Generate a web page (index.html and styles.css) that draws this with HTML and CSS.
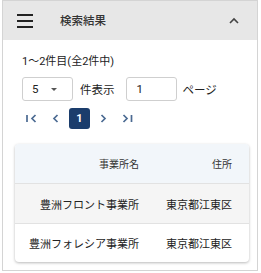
FILE: index.html
```html
<!DOCTYPE html>
<html lang="ja">
<head>
  <meta charset="UTF-8">
  <title>検索結果</title>
  <link rel="stylesheet" href="styles.css">
</head>
<body>
  <div class="panel">
    <div class="panel-head">
      <span class="menu"><i></i><i></i><i></i></span>
      <span class="title">検索結果</span>
      <svg class="chevron" width="10" height="7" viewBox="0 0 10 7"><path d="M1 6 L5 2 L9 6" fill="none" stroke="#444" stroke-width="1.6"/></svg>
    </div>
    <div class="panel-body">
      <div class="info">
        <div class="count">1～2件目(全2件中)</div>
        <div class="perpage">
          <div class="select"><span>5</span><span class="tri"></span></div>
          <span class="lbl">件表示</span>
          <div class="pageinput">1</div>
          <span class="lbl2">ページ</span>
        </div>
        <div class="pager">
          <span class="pbtn"><svg width="21" height="21" viewBox="0 0 21 21"><path d="M6 7 V14 M14.5 7 L11 10.5 L14.5 14" fill="none" stroke="#4b6a92" stroke-width="1.7"/></svg></span>
          <span class="pbtn"><svg width="21" height="21" viewBox="0 0 21 21"><path d="M12.5 7 L9 10.5 L12.5 14" fill="none" stroke="#4b6a92" stroke-width="1.7"/></svg></span>
          <span class="pbtn active">1</span>
          <span class="pbtn"><svg width="21" height="21" viewBox="0 0 21 21"><path d="M8.5 7 L12 10.5 L8.5 14" fill="none" stroke="#4b6a92" stroke-width="1.7"/></svg></span>
          <span class="pbtn"><svg width="21" height="21" viewBox="0 0 21 21"><path d="M6.5 7 L10 10.5 L6.5 14 M14.5 7 V14" fill="none" stroke="#4b6a92" stroke-width="1.7"/></svg></span>
        </div>
      </div>
      <div class="card">
        <div class="row head"><div class="c1">事業所名</div><div class="c2">住所</div></div>
        <div class="row odd"><div class="c1">豊洲フロント事業所</div><div class="c2">東京都江東区</div></div>
        <div class="row"><div class="c1">豊洲フォレシア事業所</div><div class="c2">東京都江東区</div></div>
      </div>
    </div>
  </div>
</body>
</html>
```

FILE: styles.css
```css
body {
  margin: 0;
  font-family: Roboto, "Noto Sans CJK JP", sans-serif;
  color: #222;
  background: #fff;
}
.panel {
  width: 254px; height: 269px;
  margin-left: 2px;
  border: 1px solid #d4d4d4;
  display: flex; flex-direction: column;
}
.panel-head {
  height: 39px;
  background: #e7e7e7;
  display: flex; align-items: center;
  flex-shrink: 0;
}
.menu {
  display: flex; flex-direction: column; gap: 4px;
  width: 16px; margin-left: 14px; margin-top: 1px;
}
.menu i { display: block; height: 2px; background: #222; }
.title { font-size: 11.5px; font-weight: 500; margin-left: 27px; color: #333; margin-top: -1px; }
.chevron { margin-left: auto; margin-right: 18px; margin-top: -1px; }
.panel-body { padding: 0 8px 0 12px; }
.info { padding-left: 7px; }
.count { font-size: 11px; line-height: 16px; margin-top: 14px; }
.perpage { display: flex; align-items: center; margin-top: 7px; font-size: 11.5px; }
.select {
  box-sizing: border-box; width: 51px; height: 24px;
  border: 1px solid #cfcfcf; border-radius: 3px;
  display: flex; align-items: center; padding-left: 9px;
  font-size: 11.5px;
}
.tri {
  width: 0; height: 0; margin-left: 13px;
  border-left: 3.5px solid transparent; border-right: 3.5px solid transparent;
  border-top: 3.5px solid #555;
}
.lbl { margin-left: 7px; }
.pageinput {
  box-sizing: border-box; width: 51px; height: 24px;
  border: 1px solid #cfcfcf; border-radius: 3px;
  display: flex; align-items: center; padding-left: 10px;
  margin-left: 11px;
}
.lbl2 { margin-left: 6px; }
.pager { display: flex; gap: 3px; margin-top: 7px; margin-left: -1px; }
.pbtn {
  width: 21px; height: 21px;
  display: flex; align-items: center; justify-content: center;
}
.pbtn.active {
  background: #1b3d6c; color: #fff; border-radius: 3px;
  font-size: 11px; font-weight: 700;
}
.card {
  margin-top: 15px;
  border-radius: 4px;
  box-shadow: 0 1px 3px rgba(0,0,0,0.28);
  overflow: hidden;
}
.row {
  display: grid; grid-template-columns: 137px 1fr;
  height: 39px; align-items: center;
  border-top: 1px solid #e2e2e2;
  font-size: 11px;
}
.row:last-child { height: 38px; }
.row.head { border-top: none; background: #f2f6fa; font-size: 10px; color: #333; }
.row.odd { background: #f5f5f5; }
.c1 { text-align: right; padding-right: 13px; }
.c2 { text-align: right; padding-right: 17px; }
```
